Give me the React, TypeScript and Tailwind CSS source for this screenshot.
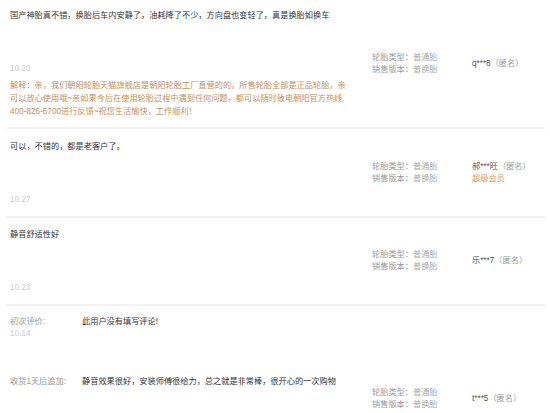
import React from "react";

const font = {
  fontFamily: '"Liberation Sans", "Noto Sans CJK SC", sans-serif',
};

function Specs() {
  return (
    <div className="w-[100px] shrink-0 self-center text-[8.2px] leading-[12px]">
      <div>
        <span className="text-[#999]">轮胎类型：</span>
        <span className="text-[#aaa]">普通胎</span>
      </div>
      <div>
        <span className="text-[#999]">销售版本：</span>
        <span className="text-[#aaa]">普换胎</span>
      </div>
    </div>
  );
}

function User({ name, vip }: { name: string; vip?: boolean }) {
  return (
    <div className="shrink-0 self-center text-[8.2px] leading-[12px]">
      <div>
        <span className="text-[#555]">{name}</span>
        <span className="text-[#999]">（匿名）</span>
      </div>
      {vip && <div className="text-[#d3a066]">超级会员</div>}
    </div>
  );
}

export default function App() {
  return (
    <div className="w-[550px] h-[413px] overflow-hidden bg-white" style={font}>
      <div className="mx-[6px] w-[539px]">
        {/* Row 1 */}
        <div className="flex border-b-2 border-[#f2f2f2] pl-[4px]">
          <div className="w-[340px] shrink-0 pt-[10px] pb-[9px] text-[8.2px]">
            <div className="min-h-[53px] leading-[12px] text-[#333]">
              国产神胎真不错，换胎后车内安静了，油耗降了不少，方向盘也变轻了，真是换胎如换车
            </div>
            <div className="leading-[12px] text-[#ccc]">10.20</div>
            <div className="mt-[4px] leading-[13px] text-[#c4915a]">
              解释：亲，我们朝阳轮胎天猫旗舰店是朝阳轮胎工厂直营的的，所售轮胎全部是正品轮胎，亲可以放心使用哦~亲如果今后在使用轮胎过程中遇到任何问题，都可以随时致电朝阳官方热线400-826-6700进行反馈~祝您生活愉快，工作顺利！
            </div>
          </div>
          <div className="w-[22px] shrink-0" />
          <Specs />
          <User name="q***8" />
        </div>

        {/* Row 2 */}
        <div className="flex border-b-2 border-[#f2f2f2] pl-[4px]">
          <div className="w-[340px] shrink-0 pt-[12px] pb-[10px] text-[8.2px]">
            <div className="min-h-[53px] leading-[12px] text-[#333]">
              可以，不错的，都是老客户了。
            </div>
            <div className="leading-[12px] text-[#ccc]">10.27</div>
          </div>
          <div className="w-[22px] shrink-0" />
          <Specs />
          <User name="郝***旺" vip />
        </div>

        {/* Row 3 */}
        <div className="flex border-b-2 border-[#f2f2f2] pl-[4px]">
          <div className="w-[340px] shrink-0 pt-[11px] pb-[10px] text-[8.2px]">
            <div className="min-h-[53px] leading-[12px] text-[#333]">
              静音舒适性好
            </div>
            <div className="leading-[12px] text-[#ccc]">10.23</div>
          </div>
          <div className="w-[22px] shrink-0" />
          <Specs />
          <User name="乐***7" />
        </div>

        {/* Row 4 */}
        <div className="flex min-h-[188px] border-b-2 border-[#f2f2f2] pl-[4px]">
          <div className="w-[340px] shrink-0 self-start pt-[10px] pb-[10px] text-[8.2px]">
            <div className="flex leading-[12px]">
              <div className="w-[72px] shrink-0">
                <div className="text-[#999]">初次评价:</div>
                <div className="text-[#ccc]">10.14</div>
              </div>
              <div className="text-[#333]">此用户没有填写评论!</div>
            </div>
            <div className="mt-[36px] flex leading-[12px]">
              <div className="w-[72px] shrink-0">
                <div className="text-[#999]">收货1天后追加:</div>
              </div>
              <div className="min-h-[53px] text-[#333]">
                静音效果很好，安装师傅很给力，总之就是非常棒，很开心的一次购物
              </div>
            </div>
          </div>
          <div className="w-[22px] shrink-0" />
          <Specs />
          <User name="t***5" />
        </div>
      </div>
    </div>
  );
}
